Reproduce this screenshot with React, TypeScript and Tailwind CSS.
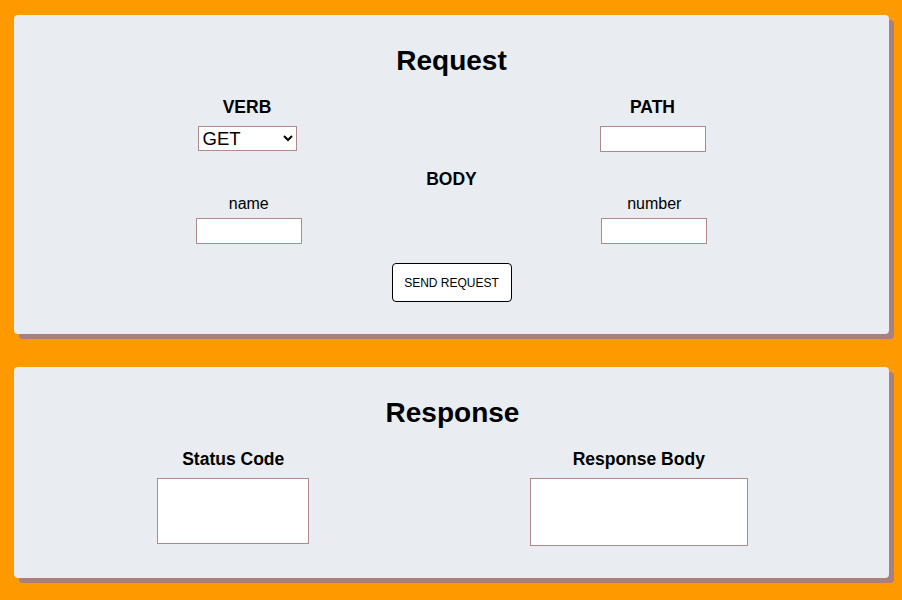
// App.tsx

export default function App() {
  return (
    <div
      className="min-h-screen bg-[#ff9900] pt-[15px] pb-[20px] text-black"
      style={{ fontFamily: '"Liberation Sans", Arial, sans-serif' }}
    >
      {/* Request */}
      <section className="ml-[14px] w-[875px] rounded bg-[#e9ecf1] px-8 pt-[30px] pb-8 shadow-[5px_5px_0_#a88080]">
        <h1 className="text-center text-[28px] leading-[32px] font-bold">
          Request
        </h1>

        <div className="mt-[20px] flex items-start justify-around">
          <div className="flex flex-col items-center">
            <label className="text-[17.5px] leading-[20px] font-bold">
              VERB
            </label>
            <select className="mt-[9px] h-[25px] w-[99px] border border-[#b08a8a] bg-white pl-0 text-[18.5px] leading-[22px]">
              <option>GET</option>
              <option>POST</option>
              <option>PUT</option>
              <option>DELETE</option>
            </select>
          </div>

          <div className="flex flex-col items-center">
            <label className="text-[17.5px] leading-[20px] font-bold">
              PATH
            </label>
            <input
              type="text"
              className="mt-[9px] h-[26px] w-[106px] border border-[#b08a8a] bg-white outline-none"
            />
          </div>
        </div>

        <div className="mt-[17px] text-center text-[17.5px] leading-[20px] font-bold">
          BODY
        </div>

        <div className="mt-[6px] flex items-start justify-around">
          <div className="flex flex-col items-center">
            <span className="text-[16px] leading-[18px]">name</span>
            <input
              type="text"
              className="mt-[5px] h-[26px] w-[106px] border border-[#b08a8a] bg-white outline-none"
            />
          </div>

          <div className="flex flex-col items-center">
            <span className="text-[16px] leading-[18px]">number</span>
            <input
              type="text"
              className="mt-[5px] h-[26px] w-[106px] border border-[#b08a8a] bg-white outline-none"
            />
          </div>
        </div>

        <div className="mt-[19px] flex justify-center">
          <button className="h-[39px] w-[120px] rounded-[4px] border border-black bg-white text-[12px]">
            SEND REQUEST
          </button>
        </div>
      </section>

      {/* Response */}
      <section className="mt-[33px] ml-[14px] w-[875px] rounded bg-[#e9ecf1] pl-[33px] pr-[31px] pt-[30px] pb-8 shadow-[5px_5px_0_#a88080]">
        <h1 className="text-center text-[28px] leading-[32px] font-bold">
          Response
        </h1>

        <div className="mt-[20px] flex items-start justify-around">
          <div className="flex flex-col items-center">
            <label className="text-[17.5px] leading-[20px] font-bold">
              Status Code
            </label>
            <textarea className="mt-[9px] h-[66px] w-[152px] resize-none border border-[#b08a8a] bg-white outline-none" />
          </div>

          <div className="flex flex-col items-center">
            <label className="text-[17.5px] leading-[20px] font-bold">
              Response Body
            </label>
            <textarea className="mt-[9px] h-[68px] w-[218px] resize-none border border-[#b08a8a] bg-white outline-none" />
          </div>
        </div>
      </section>
    </div>
  );
}
